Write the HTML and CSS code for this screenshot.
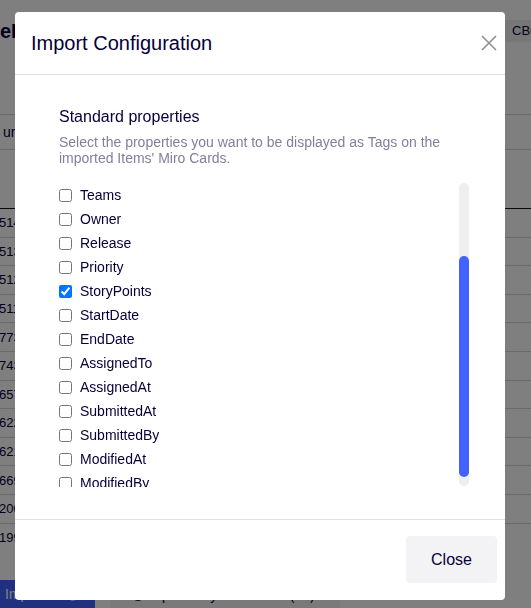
FILE: index.html
```html
<!DOCTYPE html>
<html lang="en">
<head>
<meta charset="utf-8">
<title>Import Configuration</title>
<link rel="stylesheet" href="styles.css">
</head>
<body>
<div class="page">
  <div class="topbar"></div>
  <div class="titlebar">
    <h1 class="app-title">eB</h1>
    <span class="team-chip">CBC</span>
  </div>
  <div class="filter-row"><span class="filter-text">ure</span></div>
  <div class="table-head"></div>
  <div class="rows">
    <div class="row"><span class="cell">514</span></div>
    <div class="row"><span class="cell">513</span></div>
    <div class="row"><span class="cell">512</span></div>
    <div class="row"><span class="cell">511</span></div>
    <div class="row"><span class="cell">773</span></div>
    <div class="row"><span class="cell">743</span></div>
    <div class="row"><span class="cell">657</span></div>
    <div class="row"><span class="cell">622</span></div>
    <div class="row"><span class="cell">621</span></div>
    <div class="row"><span class="cell">669</span></div>
    <div class="row"><span class="cell">200</span></div>
    <div class="row last"><span class="cell">199</span></div>
  </div>
  <div class="page-footer">
    <button class="import-all">Import all ⓘ</button>
    <div class="update-synced"><span class="radio"></span>Update Synced Items (10)</div>
  </div>
</div>

<div class="overlay">
  <div class="modal">
    <div class="modal-header">
      <h2 class="modal-title">Import Configuration</h2>
      <button class="close-x" aria-label="Close">
        <svg width="16" height="16" viewBox="0 0 16 16"><path d="M1 1 L15 15 M15 1 L1 15" stroke="#8e8e93" stroke-width="1.6" fill="none"/></svg>
      </button>
    </div>
    <div class="modal-body">
      <h3 class="section-title">Standard properties</h3>
      <p class="section-desc">Select the properties you want to be displayed as Tags on the imported Items' Miro Cards.</p>
      <div class="list-wrap">
        <div class="prop-list">
          <label class="prop"><input type="checkbox"><span>Teams</span></label>
          <label class="prop"><input type="checkbox"><span>Owner</span></label>
          <label class="prop"><input type="checkbox"><span>Release</span></label>
          <label class="prop"><input type="checkbox"><span>Priority</span></label>
          <label class="prop"><input type="checkbox" checked><span>StoryPoints</span></label>
          <label class="prop"><input type="checkbox"><span>StartDate</span></label>
          <label class="prop"><input type="checkbox"><span>EndDate</span></label>
          <label class="prop"><input type="checkbox"><span>AssignedTo</span></label>
          <label class="prop"><input type="checkbox"><span>AssignedAt</span></label>
          <label class="prop"><input type="checkbox"><span>SubmittedAt</span></label>
          <label class="prop"><input type="checkbox"><span>SubmittedBy</span></label>
          <label class="prop"><input type="checkbox"><span>ModifiedAt</span></label>
          <label class="prop"><input type="checkbox"><span>ModifiedBy</span></label>
        </div>
        <div class="scroll-track"><div class="scroll-thumb"></div></div>
      </div>
    </div>
    <div class="modal-footer">
      <button class="close-btn">Close</button>
    </div>
  </div>
</div>
</body>
</html>
```
FILE: styles.css
```css
* { box-sizing: border-box; }
html, body { margin: 0; padding: 0; }
body {
  font-family: "Liberation Sans", Arial, sans-serif;
  color: #050038;
  background: #fff;
}
.page {
  position: relative;
  height: 608px;
  overflow: hidden;
}
.topbar { height: 20px; }
.titlebar {
  display: flex;
  align-items: center;
  justify-content: space-between;
  height: 22px;
}
.app-title {
  margin: 0;
  font-size: 20px;
  font-weight: bold;
  line-height: 22px;
  white-space: nowrap;
}
.team-chip {
  width: 26px;
  height: 22px;
  line-height: 22px;
  font-size: 13px;
  padding-left: 7px;
  white-space: nowrap;
  overflow: hidden;
  background: #eeeeee;
}
.filter-row {
  margin-top: 72px;
  height: 36px;
  border-top: 1px solid #d4d4d4;
  border-bottom: 1px solid #d4d4d4;
  display: flex;
  align-items: center;
  font-size: 14px;
}
.filter-text { padding-left: 3px; }
.table-head {
  height: 59px;
  border-bottom: 1px solid #111;
}
.row {
  height: 28.6px;
  border-bottom: 1px solid #d4d4d4;
  display: flex;
  align-items: center;
  font-size: 13px;
}
.row.last { border-bottom: none; }
.cell { margin-left: -1px; }
.page-footer {
  margin-top: 28px;
  display: flex;
  align-items: center;
  gap: 15px;
  height: 30px;
}
.import-all {
  width: 95px;
  height: 30px;
  border: none;
  background: #4262ff;
  color: #fff;
  font-family: inherit;
  font-size: 14px;
  text-align: left;
  padding-left: 5px;
}
.update-synced {
  display: flex;
  align-items: center;
  gap: 8px;
  font-size: 14px;
  padding-left: 22px;
  width: 230px;
  height: 30px;
  background: #f5f5f5;
}
.radio {
  width: 12px;
  height: 12px;
  border: 2px solid #050038;
  border-radius: 50%;
}

.overlay {
  position: fixed;
  inset: 0;
  background: rgba(0, 0, 0, 0.5);
}
.modal {
  position: absolute;
  left: 15px;
  top: 12px;
  width: 490px;
  height: 588px;
  background: #fff;
  border-radius: 4px;
  display: flex;
  flex-direction: column;
}
.modal-header {
  height: 63px;
  flex: none;
  display: flex;
  align-items: center;
  justify-content: space-between;
  padding: 0 8px 0 16px;
  border-bottom: 1px solid #e1e0e7;
}
.modal-title {
  margin: 0;
  font-size: 20px;
  font-weight: normal;
  line-height: 24px;
  color: #050038;
}
.close-x {
  width: 16px;
  height: 16px;
  padding: 0;
  border: none;
  background: none;
  display: flex;
}
.modal-body {
  flex: 1;
  padding: 32px 36px 32px 44px;
  display: flex;
  flex-direction: column;
}
.section-title {
  margin: 0;
  font-size: 16px;
  font-weight: normal;
  line-height: 20px;
  color: #050038;
}
.section-desc {
  margin: 7px 0 0;
  font-size: 14px;
  line-height: 16px;
  color: #827f9b;
}
.list-wrap {
  margin-top: 17px;
  height: 304px;
  display: flex;
  justify-content: space-between;
}
.prop-list {
  overflow: hidden;
  height: 304px;
  display: flex;
  flex-direction: column;
}
.prop {
  flex: none;
  height: 24px;
  display: flex;
  align-items: center;
  gap: 8px;
  font-size: 14px;
  color: #050038;
}
.prop input {
  margin: 0;
  width: 13px;
  height: 13px;
}
.scroll-track {
  width: 10px;
  height: 303px;
  border-radius: 5px;
  background: #efefef;
  padding-top: 73px;
  padding-bottom: 9px;
}
.scroll-thumb {
  height: 100%;
  border-radius: 5px;
  background: #4262ff;
}
.modal-footer {
  flex: none;
  height: 81px;
  border-top: 1px solid #e1e0e7;
  display: flex;
  justify-content: flex-end;
  align-items: flex-start;
  padding: 16px 8px 0 0;
}
.close-btn {
  width: 91px;
  height: 47px;
  border: none;
  border-radius: 4px;
  background: #f3f3f6;
  font-family: inherit;
  font-size: 16px;
  color: #050038;
}
```
